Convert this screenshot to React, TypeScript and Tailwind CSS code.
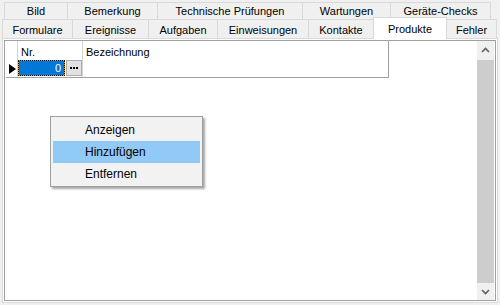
import React from 'react';

const topTabs = [
  { label: 'Bild', w: 'w-[64px]' },
  { label: 'Bemerkung', w: 'w-[91px]' },
  { label: 'Technische Prüfungen', w: 'w-[146px]' },
  { label: 'Wartungen', w: 'w-[89px]' },
  { label: 'Geräte-Checks', w: 'w-[101px]' },
];

const bottomTabs = [
  { label: 'Formulare', w: 'w-[71px]' },
  { label: 'Ereignisse', w: 'w-[77px]' },
  { label: 'Aufgaben', w: 'w-[70px]' },
  { label: 'Einweisungen', w: 'w-[92px]' },
  { label: 'Kontakte', w: 'w-[66px]' },
  { label: 'Produkte', w: 'w-[74px]', active: true },
  { label: 'Fehler', w: 'w-[51px]' },
];

const Chevron = ({ up }: { up?: boolean }) => (
  <svg width="9" height="6" viewBox="0 0 9 6" className={up ? '' : 'rotate-180'}>
    <path d="M1 5 L4.5 1.5 L8 5" fill="none" stroke="#606060" strokeWidth="1.6" />
  </svg>
);

export default function App() {
  return (
    <div className="w-[500px] h-[305px] bg-[#f0f0f0] pt-[2px] flex flex-col relative overflow-hidden text-[11px] text-black font-['Liberation_Sans',Arial,sans-serif]">
      {/* Tab rows */}
      <div className="flex pl-[4px] h-[17px]">
        {topTabs.map((t) => (
          <div
            key={t.label}
            className={`${t.w} -mr-px border-t border-l border-r border-[#d9d9d9] flex items-center justify-center pt-px`}
          >
            {t.label}
          </div>
        ))}
      </div>
      <div className="flex pl-[2px] h-[19px] relative z-10">
        {bottomTabs.map((t) =>
          t.active ? (
            <div
              key={t.label}
              className={`${t.w} -mr-px -mt-[2px] h-[22px] bg-white border-t border-l border-r border-[#d9d9d9] flex justify-center pt-[3px]`}
            >
              {t.label}
            </div>
          ) : (
            <div
              key={t.label}
              className={`${t.w} -mr-px border-t border-l border-r border-[#d9d9d9] flex items-center justify-center pt-[2px]`}
            >
              {t.label}
            </div>
          )
        )}
      </div>

      {/* Tab page */}
      <div className="ml-[2px] w-[496px] h-[265px] border border-[#d9d9d9] bg-white p-px flex">
        <div className="flex-1 border border-[#a0a0a0] flex">
          <div className="flex-1 relative">
            {/* Grid */}
            <div className="ml-px w-[383px] border-r border-b border-[#a0a0a0] flex flex-col">
              <div className="flex h-[19px]">
                <div className="w-[12px] border-r border-[#d4d4d4]" />
                <div className="w-[65px] border-r border-[#d4d4d4] pl-[3px] pt-[3px]">Nr.</div>
                <div className="flex-1 pl-[3px] pt-[3px]">Bezeichnung</div>
              </div>
              <div className="flex h-[17px]">
                <div className="w-[12px] border-r border-[#d4d4d4] flex items-center pl-[3px]">
                  <svg width="7" height="10" viewBox="0 0 7 10">
                    <path d="M0 0 L7 5 L0 10 Z" fill="#000" />
                  </svg>
                </div>
                <div className="w-[65px] border-r border-[#d4d4d4] flex pb-px">
                  <div className="w-[47px] bg-[#f08c24] border border-dotted border-black flex">
                    <div className="flex-1 bg-[#0078d7] text-white text-right pr-[3px] leading-[14px]">0</div>
                  </div>
                  <div className="w-[16px] ml-px bg-[#e1e1e1] border border-[#adadad] flex items-center justify-center gap-px">
                    <span className="w-[2px] h-[2px] bg-black" />
                    <span className="w-[2px] h-[2px] bg-black" />
                    <span className="w-[2px] h-[2px] bg-black" />
                  </div>
                </div>
                <div className="flex-1" />
              </div>
            </div>
          </div>

          {/* Scrollbar */}
          <div className="w-[17px] bg-[#f0f0f0] flex flex-col mr-px">
            <div className="h-[18px] flex items-center justify-center">
              <Chevron up />
            </div>
            <div className="flex-1 bg-[#cdcdcd] mt-px" />
            <div className="h-[17px] flex items-center justify-center">
              <Chevron />
            </div>
          </div>
        </div>
      </div>

      {/* Context menu */}
      <div className="absolute left-[50px] top-[116px] w-[153px] h-[71px] bg-[#f2f2f2] border border-[#a0a0a0] shadow-[2px_2px_2px_rgba(0,0,0,0.35)] pt-[2px] px-[2px] text-[12px]">
        {['Anzeigen', 'Hinzufügen', 'Entfernen'].map((item) => (
          <div
            key={item}
            className={`h-[22px] pl-[32px] flex items-center ${item === 'Hinzufügen' ? 'bg-[#91c9f7]' : ''}`}
          >
            {item}
          </div>
        ))}
      </div>
    </div>
  );
}
